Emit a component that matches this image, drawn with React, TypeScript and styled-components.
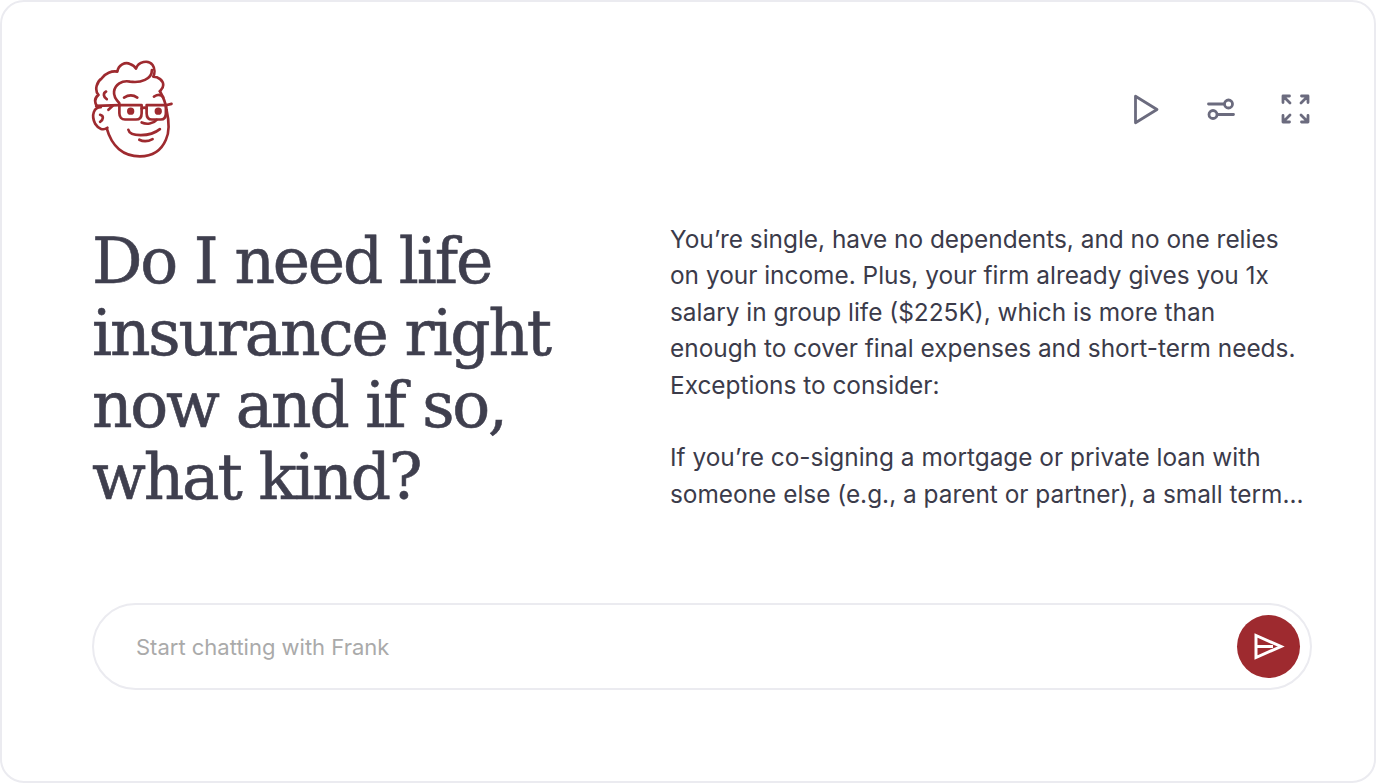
import React from "react";
import styled, { createGlobalStyle } from "styled-components";

const Global = createGlobalStyle`
  html, body { margin: 0; padding: 0; background: #fff; }
  * { box-sizing: border-box; }
`;

const Card = styled.div`
  width: 1376px;
  height: 783px;
  border: 2px solid #ebebf0;
  border-radius: 24px;
  background: #fff;
  padding: 58px 62px 0 90px;
  display: flex;
  flex-direction: column;
`;

const TopBar = styled.header`
  display: flex;
  justify-content: space-between;
  align-items: center;
  height: 98px;
`;

const Logo = styled.svg`
  width: 85px;
  height: 98px;
  margin-left: -2px;
  fill: none;
  stroke: #9e2a2f;
  stroke-width: 8;
  stroke-linecap: round;
  stroke-linejoin: round;
`;

const Tools = styled.nav`
  display: flex;
  gap: 43px;
`;

const ToolIcon = styled.svg`
  display: block;
  width: 32px;
  height: 32px;
  fill: none;
  stroke: #6b6b7e;
  stroke-width: 2.8;
  stroke-linecap: round;
  stroke-linejoin: round;
`;

const Main = styled.main`
  display: grid;
  grid-template-columns: 578px 1fr;
  align-items: end;
  margin-top: 63px;
`;

const Title = styled.h1`
  margin: 0 0 -2px;
  font-family: "DejaVu Serif", serif;
  font-weight: 400;
  font-size: 63px;
  line-height: 72px;
  letter-spacing: -2.2px;
  color: #3f3f4e;
  -webkit-text-stroke: 0.6px #3f3f4e;
`;

const Answer = styled.div`
  font-family: "Inter", sans-serif;
  font-size: 24.4px;
  line-height: 36.4px;
  color: #3b3b4a;
`;

const Line = styled.div`
  white-space: nowrap;
  min-height: 36.4px;
`;

const ChatBar = styled.form`
  display: flex;
  align-items: center;
  height: 87px;
  margin: 91px 0 0 0;
  padding: 0 10px 0 42px;
  border: 2px solid #ebebf0;
  border-radius: 44px;
  background: #fff;
`;

const ChatInput = styled.input`
  flex: 1;
  border: 0;
  outline: 0;
  background: transparent;
  font-family: "Inter", sans-serif;
  font-size: 22px;
  color: #3b3b4a;
  padding: 0;
  &::placeholder { color: #aaaaaa; opacity: 1; }
`;

const SendButton = styled.button`
  width: 63px;
  height: 63px;
  flex: none;
  padding: 0;
  border: 0;
  border-radius: 50%;
  background: #9e2a2f;
  display: flex;
  align-items: center;
  justify-content: center;
`;

const SendGlyph = styled.svg`
  width: 32px;
  height: 27px;
  fill: none;
  stroke: #fff;
  stroke-width: 3;
  stroke-linejoin: miter;
`;

const lines = [
  "You’re single, have no dependents, and no one relies",
  "on your income. Plus, your firm already gives you 1x",
  "salary in group life ($225K), which is more than",
  "enough to cover final expenses and short-term needs.",
  "Exceptions to consider:",
  "",
  "If you’re co-signing a mortgage or private loan with",
  "someone else (e.g., a parent or partner), a small term...",
];

export default function App() {
  return (
    <Card>
      <Global />
      <TopBar>
        <Logo viewBox="30 30 255 295">
          <path d="M50 168C42 155 45 143 55 135C42 120 50 95 65 85C75 70 95 62 112 65C115 45 135 35 150 42C160 46 165 50 168 56C175 35 205 28 218 45C225 55 225 70 220 80C235 80 250 92 250 105C250 115 245 118 240 124" />
          <path d="M216 60C216 88 182 100 150 95C125 90 105 105 102 125C100 140 108 150 118 160" />
          <path d="M78 125C68 130 70 142 80 148" />
          <path d="M240 124C252 145 258 160 260 180C268 215 270 245 258 270C243 305 215 320 180 320C130 320 95 290 80 236" />
          <path d="M62 172C42 172 32 195 45 222C55 238 70 243 82 234M60 195C72 198 70 210 60 216" />
          <path d="M48 168L118 166M258 166L275 162M185 176C192 172 196 172 200 176" />
          <path d="M118 166H185V190C185 203 178 209 168 209H135C125 209 118 202 118 190Z" />
          <path d="M200 166H258V190C258 203 252 209 242 209H216C206 209 200 202 200 190Z" />
          <path d="M85 180L98 168" />
          <circle cx="152" cy="184" r="7" fill="#9e2a2f" />
          <circle cx="235" cy="184" r="7" fill="#9e2a2f" />
          <path d="M132 143C145 135 160 135 172 143M222 140C235 132 245 135 250 142" />
          <path d="M185 218C200 225 220 222 230 210" />
          <path d="M145 240C150 262 210 262 240 238" />
          <path d="M178 270C190 276 205 275 218 268" />
        </Logo>
        <Tools>
          <ToolIcon viewBox="0 0 32 32" aria-label="Play">
            <path d="M5.5 3.2V29.8L27 16.5Z" />
          </ToolIcon>
          <ToolIcon viewBox="0 0 32 32" aria-label="Settings">
            <path d="M3.5 11H18.5M13 21.5H28.5" />
            <circle cx="23.5" cy="11" r="4" />
            <circle cx="8" cy="21.5" r="4" />
          </ToolIcon>
          <ToolIcon viewBox="0 0 32 32" aria-label="Expand">
            <path d="M3 9.5V3H9.5M3.5 3.5L10 10" />
            <path d="M21.5 3H28V9.5M27.5 3.5L21 10" />
            <path d="M3 22.5V29H9.5M3.5 28.5L10 22" />
            <path d="M28 22.5V29H21.5M27.5 28.5L21 22" />
          </ToolIcon>
        </Tools>
      </TopBar>
      <Main>
        <Title>
          Do I need life
          <br />
          insurance right
          <br />
          now and if so,
          <br />
          what kind?
        </Title>
        <Answer>
          {lines.map((l, i) => (
            <Line key={i}>{l}</Line>
          ))}
        </Answer>
      </Main>
      <ChatBar>
        <ChatInput placeholder="Start chatting with Frank" />
        <SendButton type="button" aria-label="Send">
          <SendGlyph viewBox="0 0 32 27">
            <path d="M3 2.5V24.5L28 13.5Z" />
            <path d="M3 13.5H20" />
          </SendGlyph>
        </SendButton>
      </ChatBar>
    </Card>
  );
}
